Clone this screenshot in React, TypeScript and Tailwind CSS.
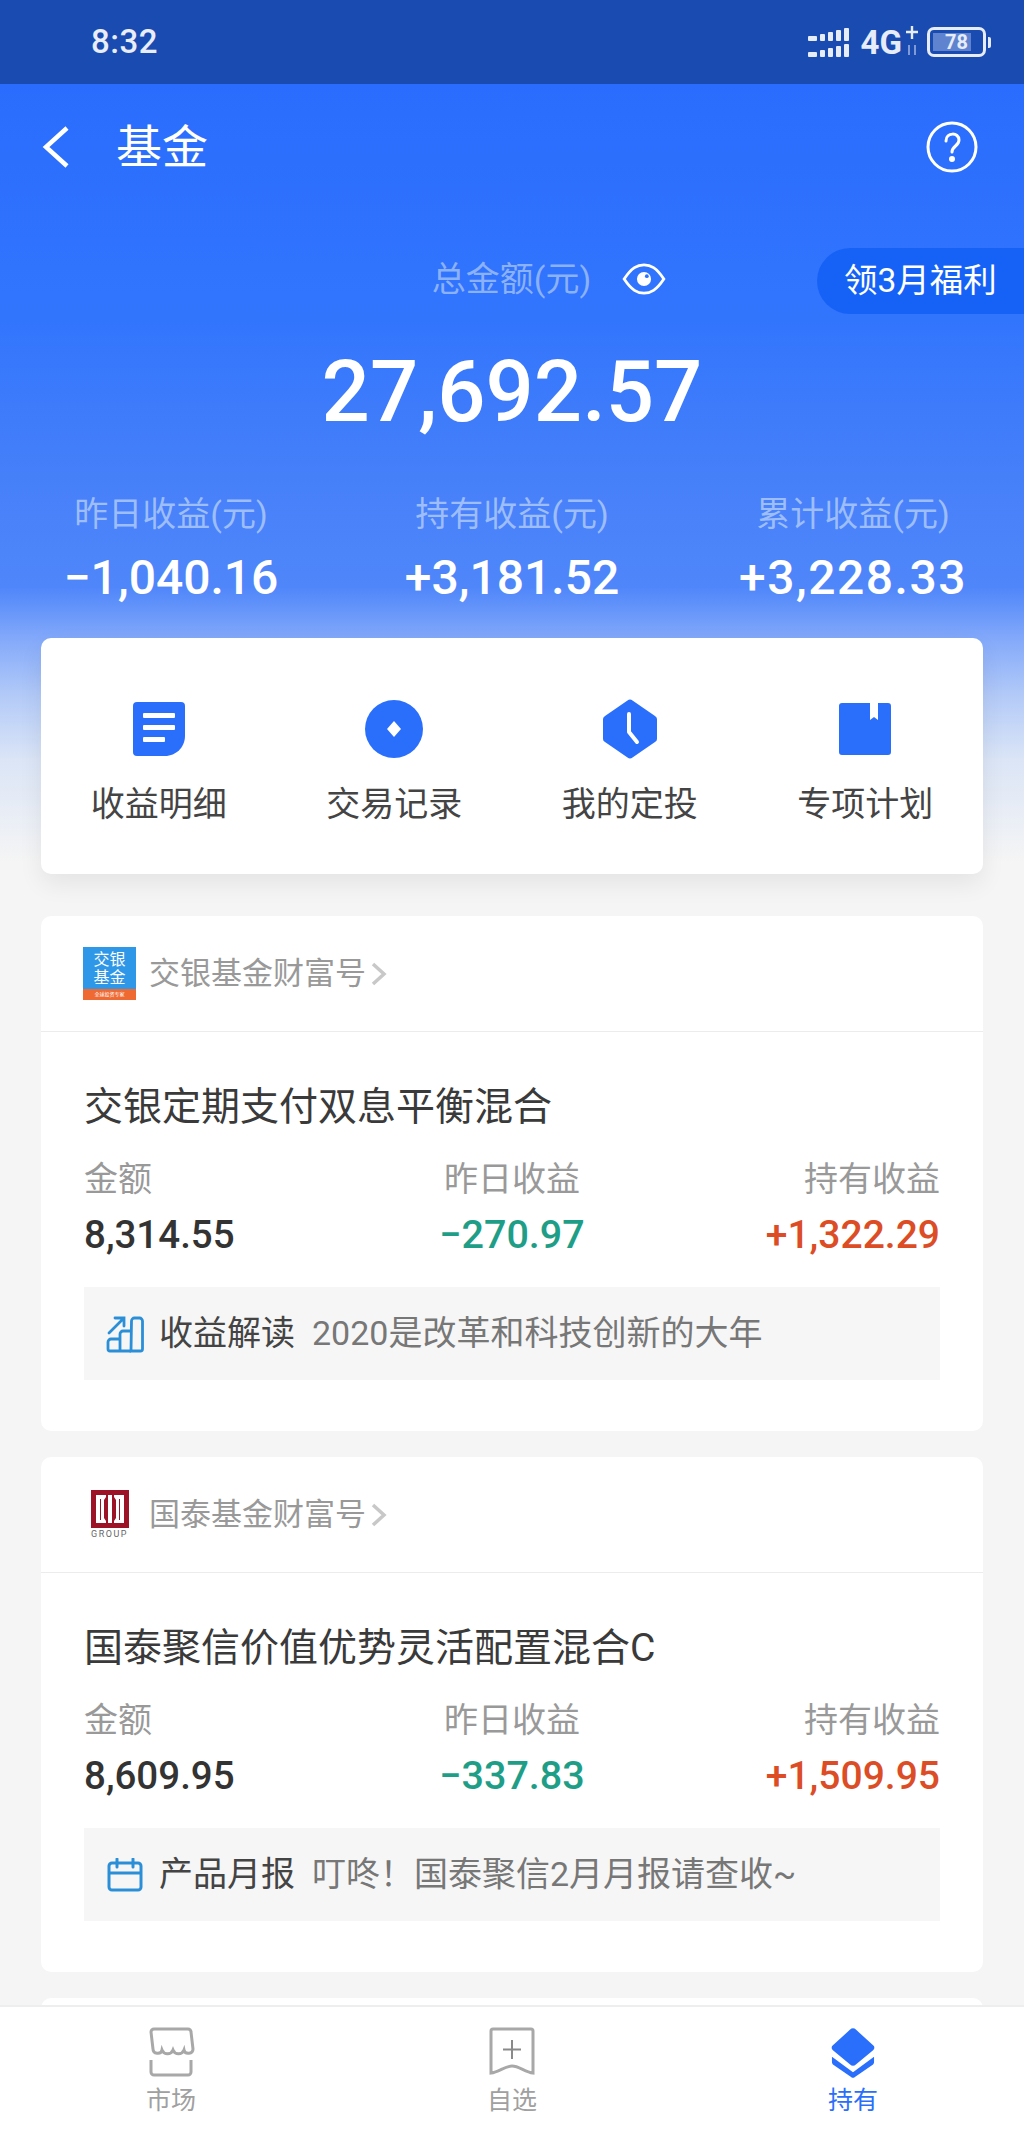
import React from "react";

const FONT = '"Roboto","Noto Sans CJK SC",sans-serif';

function Signal() {
  const rows = [0, 1];
  return (
    <div className="flex flex-col gap-[3px]">
      {rows.map((r) => (
        <div key={r} className="flex items-end gap-[3px]">
          <div className="w-[9px] h-[5px] bg-[#e6ecf8] rounded-[1px]" />
          <div className="w-[5px] h-[7px] bg-[#e6ecf8] rounded-[1px]" />
          <div className="w-[5px] h-[9px] bg-[#e6ecf8] rounded-[1px]" />
          <div className="w-[5px] h-[11px] bg-[#e6ecf8] rounded-[1px]" />
          <div className="w-[5px] h-[13px] bg-[#e6ecf8] rounded-[1px]" />
        </div>
      ))}
    </div>
  );
}

function StatusBar() {
  return (
    <div className="h-[84px] bg-[#1a4bb0] flex items-center justify-between pl-[91px] pr-[33px] shrink-0">
      <span className="text-[33px] font-medium text-[#e8edf8] tracking-[0.5px]">8:32</span>
      <div className="flex items-center">
        <Signal />
        <span className="ml-[12px] text-[33px] font-bold text-[#e6ecf8] leading-none">4G</span>
        <svg width="14" height="34" viewBox="0 0 14 34" className="ml-[3px]">
          <path d="M7 1v13M1 7h12" stroke="#e6ecf8" strokeWidth="2.4" />
          <path d="M4 20v10M10 20v10" stroke="#7f9ad6" strokeWidth="2" />
        </svg>
        <div className="ml-[8px] w-[59px] h-[30px] border-[3px] border-[#e6ecf8] rounded-[7px] p-[3px] relative flex">
          <div className="w-[38px] h-full bg-[#5f83cf]" />
          <span className="absolute inset-0 flex items-center justify-center text-[20px] font-bold text-[#e6ecf8] leading-none">78</span>
        </div>
        <div className="ml-[2px] w-[3px] h-[11px] bg-[#e6ecf8] rounded-r-[2px]" />
      </div>
    </div>
  );
}

function Stat({ label, value, track }: { label: string; value: string; track?: boolean }) {
  return (
    <div className="flex flex-col items-center w-[300px]">
      <span className="text-[34px] leading-[40px] text-[#9dbdfb] whitespace-nowrap">{label}</span>
      <span className={track ? "text-[48px] leading-[56px] mt-[16px] font-medium text-white whitespace-nowrap tracking-[1.5px]" : "text-[48px] leading-[56px] mt-[16px] font-medium text-white whitespace-nowrap"}>{value}</span>
    </div>
  );
}

function ActionIcon({ kind }: { kind: number }) {
  const c = "#2a6ffb";
  if (kind === 0)
    return (
      <svg width="54" height="56" viewBox="0 0 54 56">
        <path d="M1 5a4 4 0 0 1 4-4h44a4 4 0 0 1 4 4v30c0 11-9 20-20 20H5a4 4 0 0 1-4-4z" fill={c} />
        <rect x="11" y="12" width="32" height="5" rx="1" fill="#fff" />
        <rect x="11" y="24" width="32" height="5" rx="1" fill="#fff" />
        <rect x="11" y="36" width="22" height="5" rx="1" fill="#fff" />
      </svg>
    );
  if (kind === 1)
    return (
      <svg width="58" height="58" viewBox="0 0 58 58">
        <circle cx="29" cy="29" r="29" fill={c} />
        <path d="M29 21l7 8-7 8-7-8z" fill="#fff" />
      </svg>
    );
  if (kind === 2)
    return (
      <svg width="58" height="60" viewBox="0 0 58 60">
        <path d="M26.500 1.500a4 4 0 0 1 5 0L54 17a4 4 0 0 1 2 4v18a4 4 0 0 1-2 4L31.500 58.500a4 4 0 0 1-5 0L4 43a4 4 0 0 1-2-4V21a4 4 0 0 1 2-4z" fill={c} />
        <path d="M28 15v18l8 10" fill="none" stroke="#fff" strokeWidth="4" strokeLinecap="round" strokeLinejoin="round" />
      </svg>
    );
  return (
    <svg width="56" height="56" viewBox="0 0 56 56">
      <path d="M5 2h28v17l4-3 4 3V2h10a3 3 0 0 1 3 3v46a3 3 0 0 1-3 3H5a3 3 0 0 1-3-3V5a3 3 0 0 1 3-3z" fill={c} />
    </svg>
  );
}

function Action({ kind, label }: { kind: number; label: string }) {
  return (
    <div className="flex flex-col items-center w-[236px]">
      <div className="h-[60px] flex items-center justify-center">
        <ActionIcon kind={kind} />
      </div>
      <span className="mt-[23px] text-[34px] leading-[44px] text-[#444] whitespace-nowrap">{label}</span>
    </div>
  );
}

function LogoA() {
  return (
    <div className="w-[53px] h-[53px] flex flex-col bg-[#2f97e8] shrink-0 overflow-hidden">
      <div className="flex-1 flex flex-col items-center justify-center text-white text-[16px] leading-[18px] pt-[1px]">
        <span>交银</span>
        <span>基金</span>
      </div>
      <div className="h-[11px] bg-[#ef6a32] flex items-center justify-center text-white text-[5px] leading-none whitespace-nowrap">
        全球投资专家
      </div>
    </div>
  );
}

function LogoB() {
  return (
    <div className="w-[53px] h-[53px] flex flex-col items-center justify-center shrink-0">
      <svg width="38" height="38" viewBox="0 0 38 38">
        <rect x="0" y="0" width="38" height="38" fill="#9c1226" />
        <path d="M5 5h10v2l-2 3v18l2 3v2H5z" fill="#fff" />
        <path d="M17 5h4v28h-4z" fill="#fff" />
        <path d="M23 5h10v28H23v-2l2-3V10l-2-3z" fill="#fff" />
        <path d="M9 9h1v21H9zM28 9h1v21h-1z" fill="#9c1226" />
      </svg>
      <span className="text-[9px] leading-[12px] tracking-[1.5px] text-[#666]">GROUP</span>
    </div>
  );
}

function ChartIcon() {
  return (
    <svg width="38" height="38" viewBox="0 0 38 38" fill="none" stroke="#2b8fd8" strokeWidth="2.800">
      <path d="M25 36h9.500a2 2 0 0 0 2-2V6a3 3 0 0 0-3-3h-5a3 3 0 0 0-3 3z" />
      <path d="M25 16h-8a3 3 0 0 0-3 3v17" />
      <path d="M14 24H5a3 3 0 0 0-3 3v7a2 2 0 0 0 2 2h21" />
      <path d="M3 18L17 4M9 3h9v8" strokeLinecap="round" />
    </svg>
  );
}

function CalendarIcon() {
  return (
    <svg width="36" height="34" viewBox="0 0 36 34" fill="none" stroke="#2b8fd8" strokeWidth="3">
      <rect x="2" y="5" width="32" height="27" rx="3" />
      <path d="M2 15h32" />
      <path d="M10 1v8M26 1v8" strokeLinecap="round" />
    </svg>
  );
}

function Fund(props: {
  logo: React.ReactNode;
  org: string;
  name: string;
  amount: string;
  y: string;
  h: string;
  icon: React.ReactNode;
  tag: string;
  note: string;
}) {
  return (
    <div className="bg-white rounded-[10px] h-[515px] flex flex-col shrink-0">
      <div className="h-[116px] border-b border-[#ececec] flex items-center pl-[42px] shrink-0">
        {props.logo}
        <span className="ml-[13px] text-[31px] text-[#999] leading-none whitespace-nowrap">{props.org}</span>
        <svg width="18" height="26" viewBox="0 0 18 26" className="ml-[4px]" fill="none" stroke="#c8c8c8" strokeWidth="3.500">
          <path d="M3 3l11 10-11 10" />
        </svg>
      </div>
      <div className="px-[43px] flex flex-col">
        <div className="mt-[53px] text-[39px] leading-[44px] text-[#3a3a3a] whitespace-nowrap">{props.name}</div>
        <div className="mt-[30px] flex justify-between">
          <div className="flex flex-col items-start w-[280px]">
            <span className="text-[34px] leading-[40px] text-[#999]">金额</span>
          </div>
          <span className="text-[34px] leading-[40px] text-[#999]">昨日收益</span>
          <div className="flex flex-col items-end w-[280px]">
            <span className="text-[34px] leading-[40px] text-[#999]">持有收益</span>
          </div>
        </div>
        <div className="mt-[12px] flex justify-between items-center">
          <span className="w-[280px] text-[38.500px] leading-[48px] font-medium text-[#333]">{props.amount}</span>
          <span className="text-[39.500px] leading-[48px] font-medium text-[#1f9e87]">{props.y}</span>
          <span className="w-[280px] text-right text-[39px] leading-[48px] font-medium text-[#dc4d26]">{props.h}</span>
        </div>
        <div className="mt-[28px] h-[93px] bg-[#f6f6f6] flex items-center pl-[22px]">
          <div className="w-[38px] flex justify-center shrink-0">{props.icon}</div>
          <span className="ml-[15px] text-[34px] text-[#444] whitespace-nowrap">{props.tag}</span>
          <span className="ml-[17px] text-[34px] text-[#777] whitespace-nowrap">{props.note}</span>
        </div>
      </div>
    </div>
  );
}

function TabBar() {
  return (
    <div className="absolute left-0 right-0 bottom-0 h-[126px] bg-white border-t-2 border-[#eeeeee] flex">
      <div className="w-[342px] flex flex-col items-center pt-[20px]">
        <svg width="48" height="50" viewBox="0 0 48 50" fill="none" stroke="#a8a8a8" strokeWidth="3">
          <path d="M7 2h34a3 3 0 0 1 3 3l2 17c0 5-8 6-9 1-2 5-9 5-11 0-2 5-9 5-11 0-1 5-9 4-9-1L4 5a3 3 0 0 1 3-3z" />
          <path d="M4 33v12a3 3 0 0 0 3 3h34a3 3 0 0 0 3-3V33" />
        </svg>
        <span className="mt-[8px] text-[25px] leading-[32px] text-[#a0a0a0]">市场</span>
      </div>
      <div className="w-[340px] flex flex-col items-center pt-[20px]">
        <svg width="46" height="50" viewBox="0 0 46 50" fill="none" stroke="#a8a8a8" strokeWidth="3">
          <path d="M2 4a2 2 0 0 1 2-2h38a2 2 0 0 1 2 2v42c-8-1-14-7-21-7S10 45 2 46z" />
          <path d="M23 13v19M14 22.500h18" stroke="#8a8a8a" strokeWidth="2" />
        </svg>
        <span className="mt-[8px] text-[25px] leading-[32px] text-[#a0a0a0]">自选</span>
      </div>
      <div className="w-[342px] flex flex-col items-center pt-[20px]">
        <svg width="44" height="52" viewBox="0 0 46 52" fill="#2a6ffb">
          <path d="M20 1.500a4 4 0 0 1 6 0L44 18a3 3 0 0 1 0 5L26 38a4 4 0 0 1-6 0L2 23a3 3 0 0 1 0-5z" />
          <path d="M1 30l22 16 22-16v6a4 4 0 0 1-1 2L25 51a3 3 0 0 1-4 0L2 38a4 4 0 0 1-1-2z" />
        </svg>
        <span className="mt-[6px] text-[25px] leading-[32px] text-[#2a6ffb]">持有</span>
      </div>
    </div>
  );
}

export default function App() {
  return (
    <div className="relative w-full h-[2131px] overflow-hidden bg-[#f5f5f5] flex flex-col" style={{ fontFamily: FONT }}>
      <StatusBar />
      <div className="bg-[linear-gradient(180deg,#2a6cfd_0%,#3275fd_30%,#4680f9_50%,#4f86fa_64%,#86abfa_71%,#b4cbf8_78%,#dbe5f6_86%,#f5f5f5_99%)] h-[786px] -mb-[786px] shrink-0" />
      <div className="relative flex flex-col shrink-0">
        <div className="h-[122px] flex items-center justify-between pl-[41px] pr-[46px] pt-[3px] shrink-0">
          <div className="flex items-center">
            <svg width="30" height="44" viewBox="0 0 30 44" fill="none" stroke="#fff" strokeWidth="4.500">
              <path d="M26 3L5 22l21 19" />
            </svg>
            <span className="ml-[45px] text-[46px] leading-none text-white">基金</span>
          </div>
          <svg width="52" height="52" viewBox="0 0 52 52" fill="none" stroke="#fff" strokeWidth="3">
            <circle cx="26" cy="26" r="24" />
            <path d="M20 20c0-9 13-9 13-1 0 6-7 6-7 12" strokeLinecap="round" />
            <circle cx="26" cy="38" r="1.500" fill="#fff" />
          </svg>
        </div>
        <div className="relative h-[70px] mt-[42px]">
          <div className="flex items-center justify-center gap-[31px] h-[62px] pl-[74px]">
            <span className="text-[34px] text-[#8bb1fb] whitespace-nowrap">总金额(元)</span>
            <svg width="44" height="34" viewBox="0 0 46 36" fill="none" stroke="#fff" strokeWidth="3">
              <path d="M2 18C10 6 16 3 23 3s13 3 21 15c-8 12-14 15-21 15S10 30 2 18z" />
              <circle cx="23" cy="18" r="7.500" fill="#fff" stroke="none" />
              <circle cx="26" cy="15" r="2" fill="#2f72fd" stroke="none" />
            </svg>
          </div>
          <div className="absolute right-0 top-[0px] h-[66px] w-[207px] bg-[#1662f7] rounded-l-[33px] flex items-center pl-[27px]">
            <span className="text-[33.500px] text-white whitespace-nowrap">领3月福利</span>
          </div>
        </div>
        <div className="mt-[22px] text-center text-[85px] leading-[104px] font-medium text-white">27,692.57</div>
        <div className="mt-[50px] flex justify-between px-[21px]">
          <Stat label="昨日收益(元)" value="−1,040.16" />
          <Stat label="持有收益(元)" value="+3,181.52" />
          <Stat label="累计收益(元)" value="+3,228.33" track />
        </div>
      </div>
      <div className="relative mx-[41px] flex flex-col gap-[26px] mt-[32px]">
        <div className="h-[236px] bg-white rounded-[10px] shadow-[0_10px_24px_rgba(0,0,0,0.07)] flex items-start justify-center pt-[61px] -mb-[-16px] shrink-0">
          <Action kind={0} label="收益明细" />
          <Action kind={1} label="交易记录" />
          <Action kind={2} label="我的定投" />
          <Action kind={3} label="专项计划" />
        </div>
        <Fund
          logo={<LogoA />}
          org="交银基金财富号"
          name="交银定期支付双息平衡混合"
          amount="8,314.55"
          y="−270.97"
          h="+1,322.29"
          icon={<ChartIcon />}
          tag="收益解读"
          note="2020是改革和科技创新的大年"
        />
        <Fund
          logo={<LogoB />}
          org="国泰基金财富号"
          name="国泰聚信价值优势灵活配置混合C"
          amount="8,609.95"
          y="−337.83"
          h="+1,509.95"
          icon={<CalendarIcon />}
          tag="产品月报"
          note="叮咚！国泰聚信2月月报请查收~"
        />
        <div className="h-[80px] bg-white rounded-[10px] shrink-0" />
      </div>
      <TabBar />
    </div>
  );
}
